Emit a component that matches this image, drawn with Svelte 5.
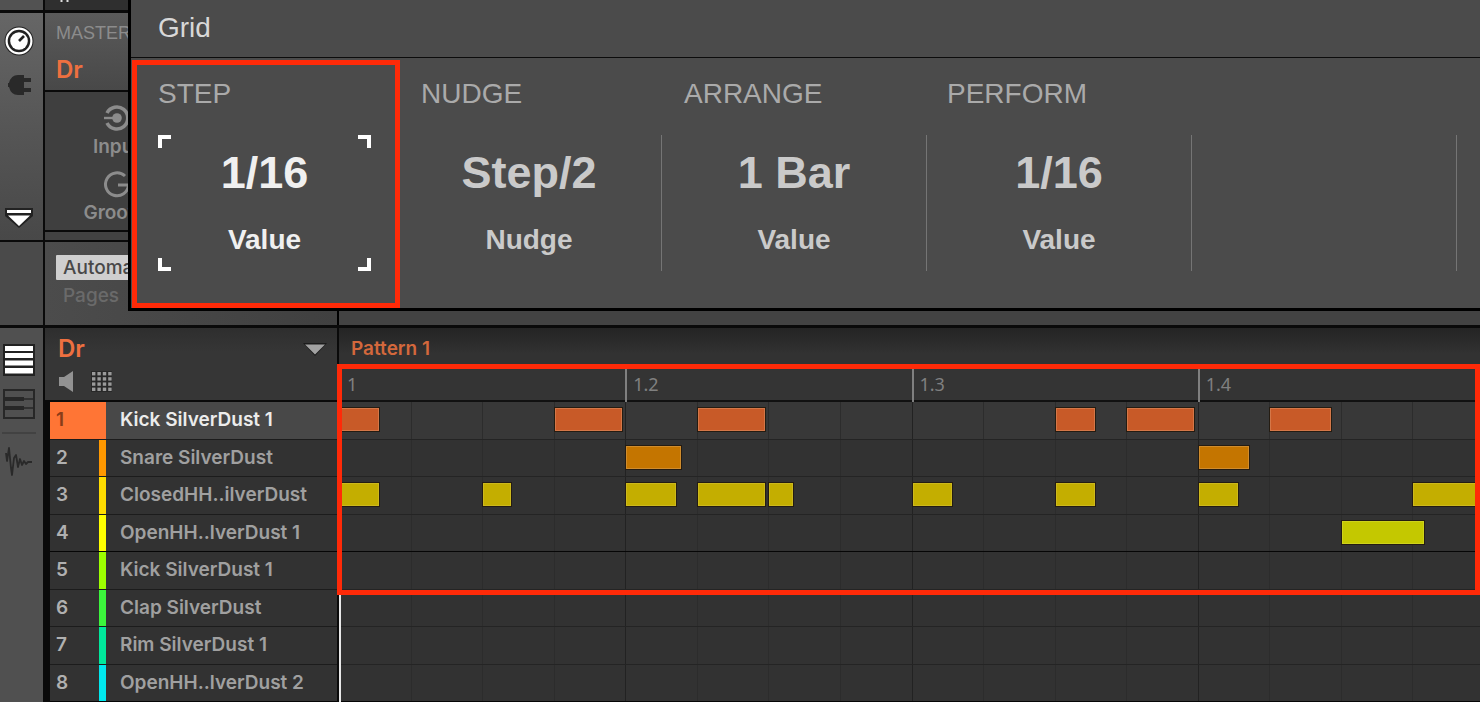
<script>
  const gridSections = ['STEP', 'NUDGE', 'ARRANGE', 'PERFORM'];
  const gridValues = [
    { value: '1/16', name: 'Value', focused: true },
    { value: 'Step/2', name: 'Nudge' },
    { value: '1 Bar', name: 'Value' },
    { value: '1/16', name: 'Value' },
    null
  ];

  // Notes map a sixteenth-step index to a length, counted in steps.
  const tracks = [
    { name: 'Kick SilverDust 1', color: '#ff7535', note: '#c85a28', edge: '#d47748', notes: { 0: 0.58, 3: 0.98, 5: 0.98, 10: 0.59, 11: 0.98, 13: 0.89 } },
    { name: 'Snare SilverDust', color: '#ff9800', note: '#c47500', edge: '#d08c2c', notes: { 4: 0.81, 12: 0.74 } },
    { name: 'ClosedHH..ilverDust', color: '#ffdc00', note: '#c4ae00', edge: '#cdb91c', notes: { 0: 0.58, 2: 0.43, 4: 0.74, 5: 0.98, 6: 0.36, 8: 0.59, 10: 0.59, 12: 0.59, 15: 1 } },
    { name: 'OpenHH..lverDust 1', color: '#ffff00', note: '#c4c800', edge: '#ced21c', notes: { 14: 1.19 } },
    { name: 'Kick SilverDust 1', color: '#9dff00', notes: {} },
    { name: 'Clap SilverDust', color: '#3cf53c', notes: {} },
    { name: 'Rim SilverDust 1', color: '#00e89c', notes: {} },
    { name: 'OpenHH..lverDust 2', color: '#00e8ee', notes: {} }
  ];
  const steps = Array.from({ length: 16 }, (_, i) => i);
  const beats = ['1', '1.2', '1.3', '1.4'];
  let selected = $state(0);
</script>

<div class="page">
  <section class="control">
    <div class="rail-top">
      <div class="rail-cap"></div>
      <nav class="rail-tools" aria-label="Control">
        <button aria-label="Channel">
          <svg width="30" height="30" viewBox="0 0 30 30">
            <circle cx="15" cy="15" r="14.5" fill="#222" />
            <circle cx="15" cy="15" r="12.4" fill="none" stroke="#fff" stroke-width="2.2" />
            <circle cx="15" cy="15" r="8.8" fill="#fff" />
            <path d="M15 15L20 10" stroke="#222" stroke-width="2.6" />
          </svg>
        </button>
        <button aria-label="Plug-in">
          <svg width="26" height="22" viewBox="0 0 26 22">
            <path d="M2 9H3Q5 1 12 1H18V4H25V8H18V14H25V18H18V21H12Q5 21 3 13H2Z" fill="#292929" />
          </svg>
        </button>
        <button class="fold" aria-label="Fold">
          <svg width="28" height="20" viewBox="0 0 28 20">
            <path d="M0 0H28V8L14 20L0 8Z" fill="#222" />
            <path d="M2 2H26V5H2ZM3 7.5H25L14 18Z" fill="#fff" />
          </svg>
        </button>
      </nav>
      <div class="rail-base"></div>
    </div>

    <div class="channel">
      <div class="channel-cap">
        <svg width="12" height="4" viewBox="0 0 12 4"><path d="M2.500 0V2M8.500 0V2" stroke="#ddd" stroke-width="2" /></svg>
      </div>
      <header class="master">
        <span class="master-label">MASTER</span>
        <strong>Dr</strong>
      </header>
      <div class="properties">
        <button>
          <svg width="26" height="28" viewBox="0 0 26 28">
            <path d="M3 9A11 11 0 1 1 3 19" fill="none" stroke="#8c8c8c" stroke-width="3.6" />
            <circle cx="13" cy="14" r="4.800" fill="#8c8c8c" />
            <path d="M0 14H10" stroke="#8c8c8c" stroke-width="2.4" />
          </svg>
          <span>Input</span>
        </button>
        <button>
          <svg width="26" height="28" viewBox="0 0 26 28">
            <path d="M21 6A11.500 11.500 0 1 0 24.500 15H14" fill="none" stroke="#8c8c8c" stroke-width="3" />
          </svg>
          <span>Groove</span>
        </button>
      </div>
      <div class="channel-strip"></div>
      <div class="automation">
        <button class="auto">Automation</button>
        <button class="pages">Pages</button>
      </div>
    </div>
  </section>

  <section class="pattern">
    <nav class="rail-bottom" aria-label="Editor view">
      <button aria-label="Group view">
        <svg width="32" height="32" viewBox="0 0 32 32">
          <rect width="32" height="32" fill="#222" />
          <path d="M2 2H30V7H2ZM2 9H30V14H2ZM2 16.500H30V21.500H2ZM2 24H30V29.500H2Z" fill="#fff" />
        </svg>
      </button>
      <button aria-label="Keyboard view">
        <svg width="32" height="30" viewBox="0 0 32 30">
          <rect x="1" y="1" width="30" height="28" fill="#505050" stroke="#272727" stroke-width="2" />
          <path d="M2 10H31M2 19H31" stroke="#272727" stroke-width="1.500" />
          <path d="M1 8H21V12H1ZM1 17H21V21H1Z" fill="#272727" />
        </svg>
      </button>
      <hr />
      <button aria-label="Sampling">
        <svg width="28" height="30" viewBox="0 0 28 30">
          <path d="M1 6L2 14L4 1L6 21L7 28L9 11L11 8L13 20L15 12L17 18L19 14L21 17L23 15H27" fill="none" stroke="#292929" stroke-width="1.800" stroke-linejoin="round" />
        </svg>
      </button>
    </nav>

    <div class="sounds">
      <header class="group">
        <div class="group-row">
          <strong>Dr</strong>
          <button aria-label="Group menu">
            <svg width="24" height="13" viewBox="0 0 24 13"><path d="M0 0H24L12 13Z" fill="#1c1c1c" /><path d="M2 1.500H22L12 11.500Z" fill="#a2a2a2" /></svg>
          </button>
        </div>
        <div class="group-icons">
          <button aria-label="Audition">
            <svg width="15" height="21" viewBox="0 0 15 21"><path d="M0 6H5L14 0V21L5 15H0Z" fill="#929292" /></svg>
          </button>
          <button aria-label="Pads">
            <svg width="21" height="21" viewBox="0 0 21 21">
              <rect width="21" height="21" fill="#282828" />
              {#each [0, 1, 2, 3] as r}
                {#each [0, 1, 2, 3] as c}
                  <rect x={1 + c * 5.4} y={1 + r * 5.2} width="3.400" height="3.400" fill="#9a9a9a" />
                {/each}
              {/each}
            </svg>
          </button>
        </div>
      </header>
      <div class="list">
        {#each tracks as track, i}
          <button class="sound" class:selected={selected === i} class:bank={i % 4 === 3} onclick={() => (selected = i)}>
            <span class="num" style:--tint={track.color}>{i + 1}</span>
            <span class="name">{track.name}</span>
          </button>
        {/each}
      </div>
    </div>

    <div class="editor">
      <header class="pattern-name">Pattern 1</header>
      <div class="ruler timeline">
        {#each beats as beat}<span>{beat}</span>{/each}
      </div>
      <div class="lanes timeline">
        {#each tracks as track, i}
          <div class="lane" class:selected={selected === i} class:bank={i % 4 === 3}>
            {#each steps as step}
              <div class="step" class:beat={step % 4 === 0}>
                {#if track.notes[step]}
                  <i class="note" style:width="{track.notes[step] * 100}%" style:background={track.note} style:--edge={track.edge}></i>
                {/if}
              </div>
            {/each}
          </div>
        {/each}
      </div>
      <div class="playhead"></div>
      <div class="mark mark-editor"></div>
    </div>
  </section>

  <section class="popup">
    <h2>Grid</h2>
    <div class="popup-body">
      <div class="labels">
        {#each gridSections as label}<span>{label}</span>{/each}
      </div>
      <div class="values">
        {#each gridValues as cell, i}
          <div class="cell" class:divided={i > 0}>
            {#if cell}
              <button class:focused={cell.focused}>
                <span class="value">{cell.value}</span>
                <span class="param">{cell.name}</span>
                {#if cell.focused}
                  <i class="corner tl"></i><i class="corner tr"></i><i class="corner bl"></i><i class="corner br"></i>
                {/if}
              </button>
            {/if}
          </div>
        {/each}
      </div>
      <div class="mark mark-step"></div>
    </div>
  </section>
</div>

<style>
  :global(body) { margin: 0; background: #000; }
  .page {
    position: relative;
    display: flex;
    flex-direction: column;
    min-height: 100vh;
    overflow: hidden;
    background: #0a0a0a;
    color: #a0a0a0;
    font: 600 19px/24px Inter, "Liberation Sans", sans-serif;
  }
  .page, .page * { box-sizing: border-box; }
  button { padding: 0; border: 0; background: none; color: inherit; font: inherit; text-align: inherit; }
  svg { display: block; }
  strong { color: #ee7040; font-size: 24px; font-weight: 600; line-height: 28px; }

  .control { display: flex; gap: 2px; height: 325px; margin-bottom: 3px; }
  .rail-top { display: flex; flex-direction: column; width: 43px; }
  .rail-cap { height: 10px; margin-bottom: 3px; background: #525252; }
  .rail-tools {
    display: flex;
    flex-direction: column;
    align-items: center;
    gap: 18px;
    height: 227px;
    margin-bottom: 2px;
    padding: 13px 5px 12px 0;
    background: linear-gradient(#666, #565656 50%, #484848);
  }
  .fold { margin-top: auto; }
  .rail-base { flex: 1; background: #4a4a4a; }

  .channel { display: flex; flex: 1; flex-direction: column; }
  .channel-cap { height: 10px; margin-bottom: 3px; padding-left: 14px; background: #2f2f2f; }
  .master {
    display: flex;
    flex-direction: column;
    gap: 11px;
    height: 77px;
    margin-bottom: 2px;
    padding: 8px 11px 0;
    background: linear-gradient(#5a5a5a, #484848);
  }
  .master-label { color: #8c8c8c; font-size: 18px; font-weight: 400; font-family: "Liberation Sans", Arial, sans-serif; }
  .properties {
    display: flex;
    flex-direction: column;
    gap: 11px;
    height: 138px;
    margin-bottom: 2px;
    padding-top: 12px;
    background: #3f3f3f;
  }
  .properties button { display: flex; flex-direction: column; align-items: center; gap: 3px; width: 143px; color: #8c8c8c; }
  .channel-strip { height: 8px; margin-bottom: 2px; background: #424242; }
  .automation {
    display: flex;
    flex: 1;
    flex-direction: column;
    align-items: flex-start;
    gap: 3px;
    padding: 13px 11px;
    background: linear-gradient(90deg, #4c4c4c, #404040 292px, #000 292px, #000 294px, #434343 294px);
  }
  .auto, .pages { padding: 0 7px; font-weight: 500; line-height: 25px; }
  .auto { background: #cfcfcf; color: #484848; border-radius: 1px; }
  .pages { color: #6a6a6a; }

  .pattern { display: flex; flex: 1; }
  .rail-bottom {
    display: flex;
    flex-direction: column;
    align-items: center;
    gap: 13px;
    width: 43px;
    padding: 16px 5px 0 0;
    background: #505050;
  }
  .rail-bottom hr { width: 34px; height: 2px; margin: 0; border: 0; background: #424242; }

  .sounds { display: flex; flex-direction: column; width: 292px; margin: 0 2px; }
  .group { height: 72px; margin-bottom: 2px; padding: 7px 10px 0 13px; background: linear-gradient(#2e2e2e, #363636 24px); }
  .group-row, .group-icons { display: flex; align-items: center; }
  .group-row { justify-content: space-between; }
  .group-icons { gap: 17px; padding: 8px 0 0 1px; }
  .list, .lanes { display: grid; flex: 1; grid-template-rows: repeat(8, minmax(0, 1fr)); }
  .list { padding-left: 5px; }
  .sound { display: flex; min-height: 36px; border-bottom: 1px solid #1c1c1c; background: #323232; }
  .sound.selected { background: #484848; color: #ececec; }
  .num { align-self: stretch; width: 56px; padding: 6px 6px 0; border-right: 7px solid var(--tint); color: #b0b0b0; }
  .selected .num { background: var(--tint); color: #8a3c18; }
  .name { flex: 1; padding: 6px 0 0 14px; white-space: nowrap; }
  .bank { border-bottom-color: #060606; }

  .editor { position: relative; display: flex; flex: 1; flex-direction: column; min-width: 0; overflow: clip; overflow-clip-margin: 2px; background: #323232; }
  .pattern-name { height: 38px; padding: 9px 12px 0; background: linear-gradient(#242424, #323232 26px); color: #d4683c; }
  .timeline { width: calc(100% + 4px); }
  .ruler { display: grid; grid-template-columns: repeat(4, 1fr); height: 36px; border-bottom: 2px solid #111; background: #343434; }
  .ruler span { padding: 6px; border-left: 2px solid #808080; color: #808080; font: 18px/24px "Noto Sans", sans-serif; }
  .lane { display: grid; grid-template-columns: repeat(16, minmax(0, 1fr)); min-height: 36px; border-bottom: 1px solid #242424; }
  .lane.selected { background: #383838; }
  .lane.bank { border-bottom-color: #060606; }
  .step { position: relative; border-left: 1px solid #2c2c2c; }
  .step.beat { border-left-color: #222; }
  .note { position: absolute; z-index: 1; top: 5px; left: -1px; height: 25px; border: 1px solid #241c12; box-shadow: inset 0 0 0 1px var(--edge); }
  .playhead { position: absolute; top: 74px; bottom: 0; left: 0; width: 2px; background: #e8e8e8; }

  .mark { position: absolute; z-index: 2; border: 5px solid #ff2a08; pointer-events: none; }
  .mark-editor { top: 36px; right: 0; left: -2px; height: 231px; }
  .mark-step { top: 2px; left: 1px; width: calc((100% - 24px) / 5 + 3px); bottom: 0; }

  .popup {
    position: absolute;
    z-index: 3;
    top: 0;
    right: 0;
    left: 128px;
    border: solid #000;
    border-width: 0 0 3px 3px;
    background: #4b4b4b;
    font-family: "Liberation Sans", Arial, sans-serif;
  }
  h2 { margin: 0; padding: 12px 27px 13px; border-bottom: 1px solid #0c0c0c; background: #4b4b4b; color: #d8d8d8; font-size: 28px; font-weight: 400; line-height: 32px; }
  .popup-body { position: relative; padding: 20px 0 37px; }
  .labels { display: grid; grid-template-columns: repeat(5, 1fr); padding: 0 7px 0 27px; color: #aaa; font-size: 28px; font-weight: 400; line-height: 32px; }
  .values { display: grid; grid-template-columns: repeat(5, 1fr) 23px; margin-top: 25px; padding-left: 1px; }
  .cell { display: flex; height: 136px; padding: 0 26px; }
  .divided { border-right: 1px solid #757575; }
  .cell button { position: relative; display: flex; flex: 1; flex-direction: column; align-items: center; gap: 21px; padding-top: 12px; color: #cacaca; }
  .cell .focused { color: #f0f0f0; }
  .value { font-size: 45px; font-weight: 700; line-height: 52px; white-space: nowrap; }
  .param { font-size: 28px; font-weight: 700; line-height: 40px; }
  .corner { position: absolute; width: 13px; height: 13px; border: 0 solid #fff; }
  .tl { top: 0; left: 0; border-width: 4px 0 0 4px; }
  .tr { top: 0; right: 0; border-width: 4px 4px 0 0; }
  .bl { bottom: 0; left: 0; border-width: 0 0 4px 4px; }
  .br { right: 0; bottom: 0; border-width: 0 4px 4px 0; }
</style>
